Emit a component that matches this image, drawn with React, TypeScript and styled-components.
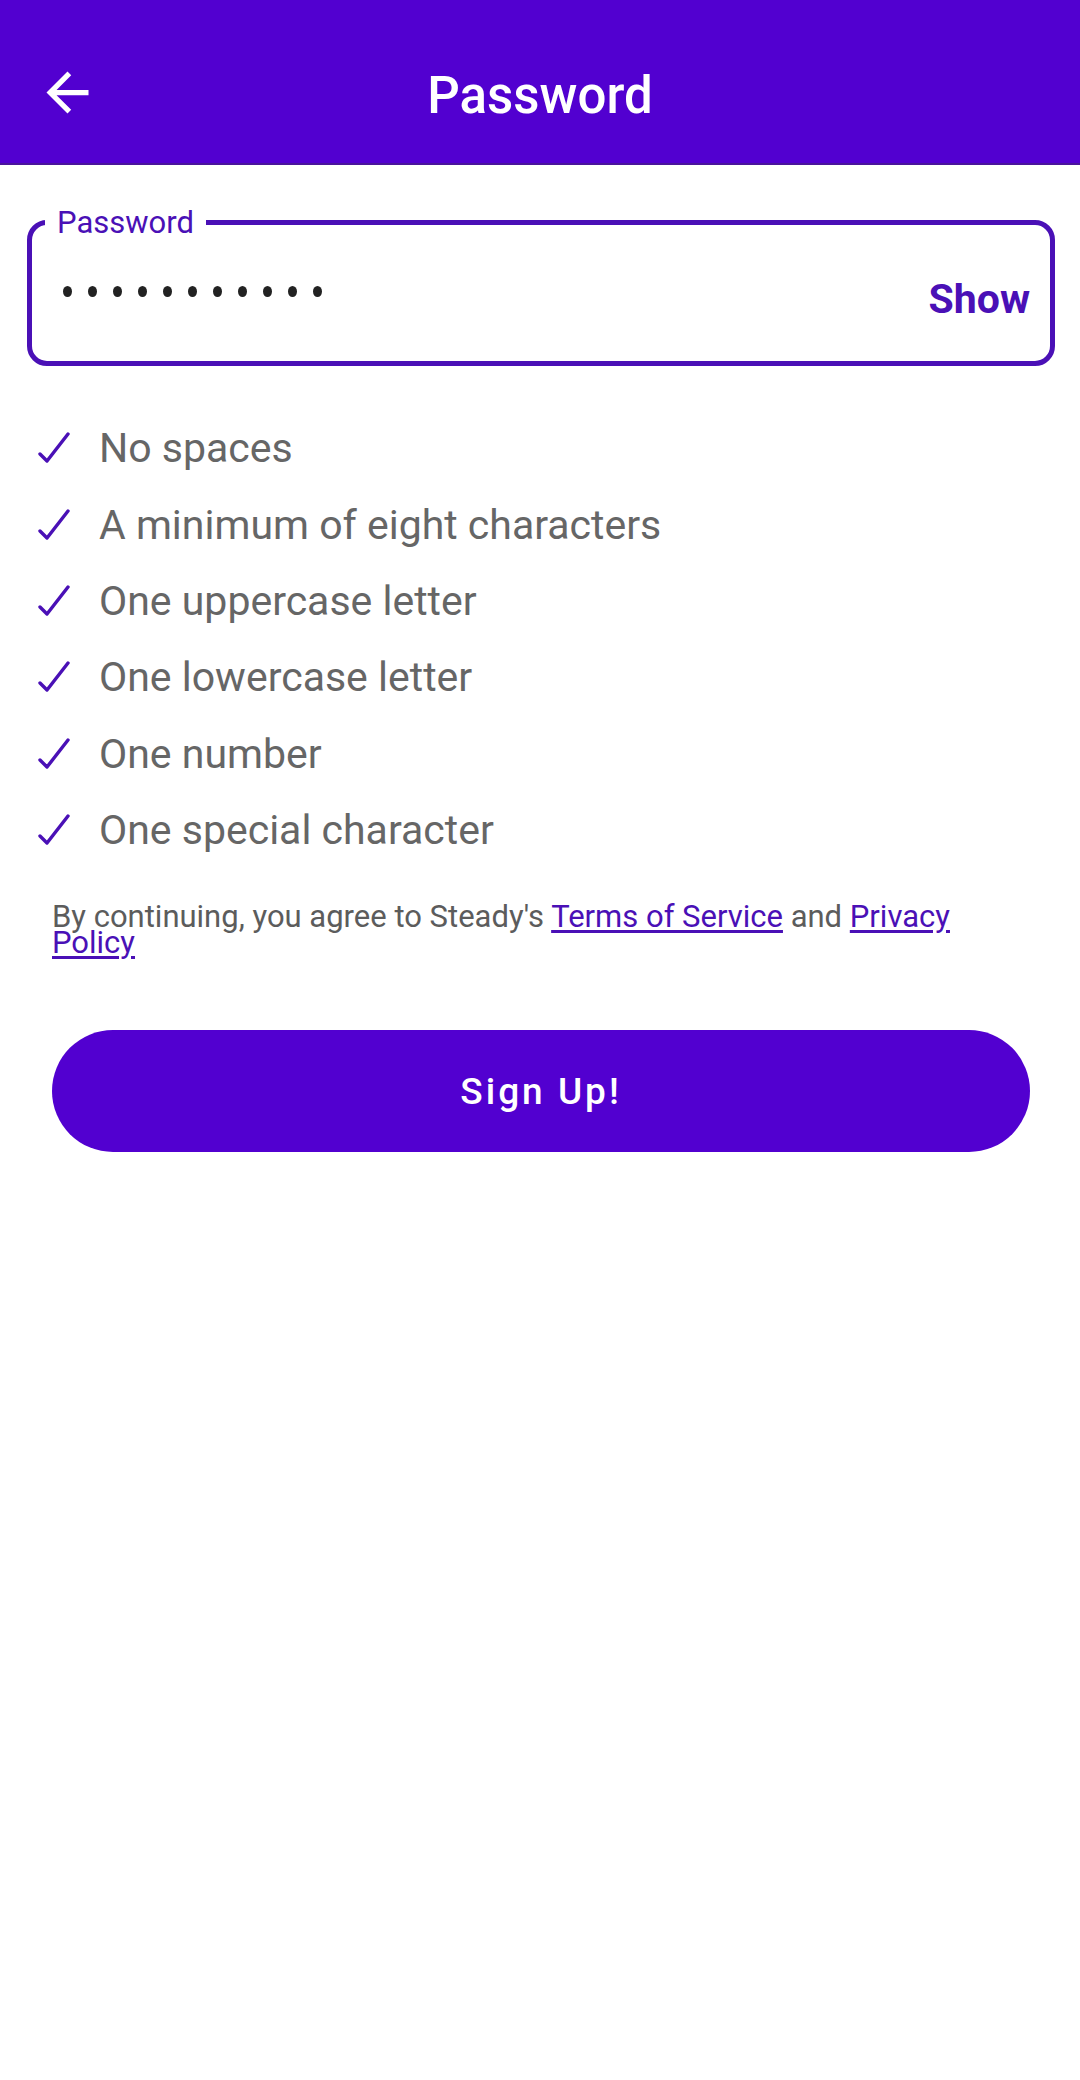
import styled, { createGlobalStyle } from "styled-components";

const PRIMARY = "#5200d0";
const ACCENT = "#4a10b6";

const GlobalStyle = createGlobalStyle`
  html, body {
    margin: 0;
    padding: 0;
    background: #ffffff;
    font-family: Roboto, "Noto Sans", "Liberation Sans", sans-serif;
  }
  * { box-sizing: border-box; }
`;

const Screen = styled.div`
  width: 1080px;
  min-height: 2080px;
  background: #ffffff;
`;

const TopBar = styled.header`
  height: 165px;
  padding-top: 22px;
  background: ${PRIMARY};
  border-bottom: 2px solid #4a149c;
  display: flex;
  align-items: center;
`;

const BackButton = styled.button`
  width: 63px;
  height: 63px;
  margin-left: 36px;
  padding: 0;
  border: none;
  background: transparent;
  display: flex;
  align-items: center;
  justify-content: center;
`;

const Title = styled.h1`
  flex: 1;
  margin: 5px 99px 0 0;
  text-align: center;
  color: #ffffff;
  font-size: 51px;
  font-weight: 500;
  line-height: 1;
`;

const Body = styled.main`
  padding-top: 55px;
`;

const Field = styled.div`
  position: relative;
  margin: 0 25px 0 27px;
  height: 146px;
  border: 5px solid ${ACCENT};
  border-radius: 20px;
  display: flex;
  align-items: center;
  justify-content: space-between;
  padding: 0 20px 0 31px;
`;

const FieldLabel = styled.span`
  position: absolute;
  left: 13px;
  top: -19px;
  padding: 0 12px;
  background: #ffffff;
  color: ${ACCENT};
  font-size: 31px;
  line-height: 34px;
`;

const Dots = styled.div`
  display: flex;
  gap: 16px;
  margin-top: -4px;
`;

const Dot = styled.span`
  width: 9px;
  height: 11px;
  border-radius: 50%;
  background: #222222;
`;

const ShowToggle = styled.button`
  border: none;
  background: transparent;
  padding: 0;
  margin-top: 12px;
  color: ${ACCENT};
  font-family: inherit;
  font-size: 41px;
  font-weight: 700;
`;

const Rules = styled.ul`
  list-style: none;
  margin: 44px 0 0;
  padding: 0 0 0 38px;
`;

const Rule = styled.li`
  height: 76.4px;
  display: flex;
  align-items: center;
  gap: 29px;
  color: #666666;
  font-size: 41px;
`;

const Terms = styled.p`
  margin: 36px 52px 0;
  color: #5c5c5c;
  font-size: 31px;
  line-height: 26px;
`;

const TermsLink = styled.a`
  color: ${ACCENT};
  text-decoration: underline;
  text-underline-offset: 3px;
`;

const SignUp = styled.button`
  display: block;
  margin: 74px 50px 0 52px;
  width: 978px;
  height: 122px;
  border: none;
  border-radius: 61px;
  background: ${PRIMARY};
  color: #ffffff;
  font-family: inherit;
  font-size: 37px;
  font-weight: 500;
  letter-spacing: 3px;
`;

const rules = [
  "No spaces",
  "A minimum of eight characters",
  "One uppercase letter",
  "One lowercase letter",
  "One number",
  "One special character",
];

const CheckIcon = () => (
  <svg width="32" height="32" viewBox="0 0 32 32" fill="none">
    <polyline
      points="2,22 9,29 30,2"
      stroke={ACCENT}
      strokeWidth="3.4"
      strokeLinecap="round"
      strokeLinejoin="round"
    />
  </svg>
);

export default function App() {
  return (
    <Screen>
      <GlobalStyle />
      <TopBar>
        <BackButton aria-label="Back">
          <svg width="63" height="63" viewBox="0 0 24 24">
            <path
              fill="#ffffff"
              d="M20 11H7.83l5.59-5.59L12 4l-8 8 8 8 1.41-1.41L7.83 13H20v-2z"
            />
          </svg>
        </BackButton>
        <Title>Password</Title>
      </TopBar>
      <Body>
        <Field>
          <FieldLabel>Password</FieldLabel>
          <Dots>
            {Array.from({ length: 11 }).map((_, i) => (
              <Dot key={i} />
            ))}
          </Dots>
          <ShowToggle>Show</ShowToggle>
        </Field>
        <Rules>
          {rules.map((r) => (
            <Rule key={r}>
              <CheckIcon />
              {r}
            </Rule>
          ))}
        </Rules>
        <Terms>
          By continuing, you agree to Steady's{" "}
          <TermsLink>Terms of Service</TermsLink> and{" "}
          <TermsLink>Privacy Policy</TermsLink>
        </Terms>
        <SignUp>Sign Up!</SignUp>
      </Body>
    </Screen>
  );
}
